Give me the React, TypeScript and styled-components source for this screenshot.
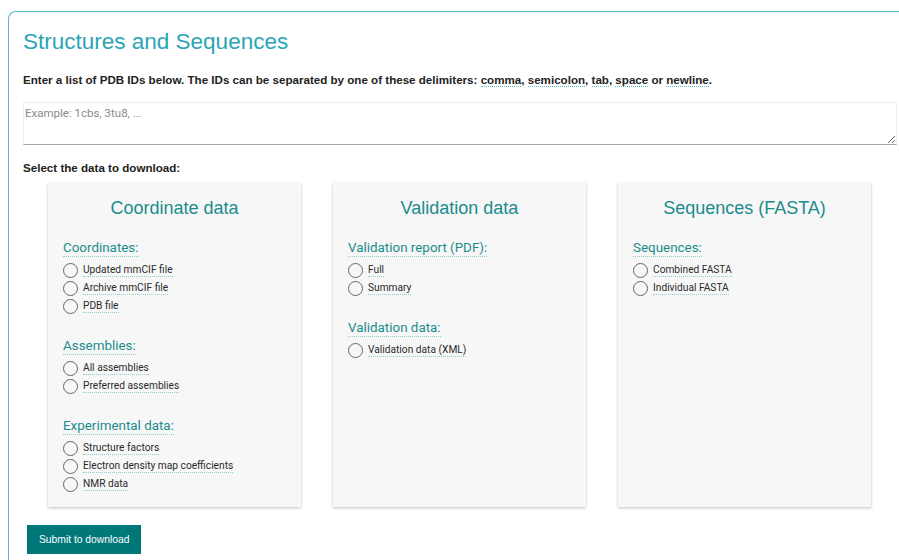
import React from "react";
import styled, { createGlobalStyle } from "styled-components";

const GlobalStyle = createGlobalStyle`
  html, body {
    margin: 0;
    padding: 0;
    background: #ffffff;
    overflow: hidden;
  }
  body {
    padding: 11px 0 0 8px;
    font-family: "Liberation Sans", Arial, sans-serif;
    color: #222;
  }
`;

const Panel = styled.section`
  width: 874px;
  padding: 16px 14px 6px 14px;
  border-top: 1px solid #5ab9c2;
  border-left: 1px solid #5ab9c2;
  border-top-left-radius: 8px;
  background: #fff;
`;

const Title = styled.h2`
  margin: 0;
  font-family: "Liberation Sans", Arial, sans-serif;
  font-weight: 400;
  font-size: 22.5px;
  line-height: 28px;
  color: #2ba5b6;
`;

const Intro = styled.p`
  margin: 15px 0 0;
  font-size: 11.6px;
  line-height: 18px;
  font-weight: 700;
  color: #222;
`;

const Term = styled.span`
  border-bottom: 1px dotted #5ab9c2;
`;

const IdInput = styled.textarea`
  display: block;
  box-sizing: border-box;
  width: 874px;
  height: 43px;
  margin-top: 13px;
  padding: 3px 0 0 1px;
  border: 1px solid #eeeeee;
  border-bottom: 1px solid #a8a8a8;
  font-family: Roboto, "Liberation Sans", sans-serif;
  font-size: 11.5px;
  color: #333;
  outline: none;
  &::placeholder {
    color: #8a8a8a;
  }
`;

const SectionLabel = styled.div`
  margin-top: 16px;
  font-size: 11.6px;
  line-height: 14px;
  font-weight: 700;
  color: #222;
`;

const Cards = styled.div`
  display: flex;
  gap: 32px;
  padding-left: 25px;
  margin-top: 8px;
`;

const Card = styled.div`
  box-sizing: border-box;
  width: 253px;
  height: 324px;
  padding: 14px 15px 0;
  background: #f7f7f7;
  box-shadow: 0 1px 3px rgba(0, 0, 0, 0.18), 0 1px 2px rgba(0, 0, 0, 0.08);
`;

const CardTitle = styled.h3`
  margin: 0 0 19px;
  text-align: center;
  font-family: "Liberation Sans", Arial, sans-serif;
  font-weight: 400;
  font-size: 18px;
  line-height: 22px;
  color: #1b8c8c;
`;

const Group = styled.div`
  margin-bottom: 21px;
`;

const GroupTitle = styled.div`
  display: inline-block;
  font-family: Roboto, "Liberation Sans", sans-serif;
  font-size: 13.4px;
  line-height: 16px;
  color: #1b8c8c;
  border-bottom: 1px dotted #8fcfd4;
  margin-bottom: 4px;
`;

const Option = styled.label`
  display: flex;
  align-items: center;
  height: 18px;
  gap: 5px;
  cursor: pointer;
`;

const Circle = styled.span`
  box-sizing: border-box;
  width: 15px;
  height: 15px;
  border: 1.5px solid #666;
  border-radius: 50%;
  flex: none;
`;

const OptionText = styled.span`
  font-family: Roboto, "Liberation Sans", sans-serif;
  font-size: 10.2px;
  line-height: 13px;
  color: #2a2a2a;
  border-bottom: 1px dotted #8fcfd4;
`;

const SubmitButton = styled.button`
  margin: 18px 0 0 4px;
  height: 29px;
  padding: 0 12px;
  border: none;
  background: #00787a;
  color: #fff;
  font-family: "Liberation Sans", Arial, sans-serif;
  font-size: 10.3px;
  cursor: pointer;
`;

type OptionGroup = { title: string; options: string[] };
type CardData = { title: string; groups: OptionGroup[] };

const cards: CardData[] = [
  {
    title: "Coordinate data",
    groups: [
      {
        title: "Coordinates:",
        options: ["Updated mmCIF file", "Archive mmCIF file", "PDB file"],
      },
      {
        title: "Assemblies:",
        options: ["All assemblies", "Preferred assemblies"],
      },
      {
        title: "Experimental data:",
        options: [
          "Structure factors",
          "Electron density map coefficients",
          "NMR data",
        ],
      },
    ],
  },
  {
    title: "Validation data",
    groups: [
      { title: "Validation report (PDF):", options: ["Full", "Summary"] },
      { title: "Validation data:", options: ["Validation data (XML)"] },
    ],
  },
  {
    title: "Sequences (FASTA)",
    groups: [
      {
        title: "Sequences:",
        options: ["Combined FASTA", "Individual FASTA"],
      },
    ],
  },
];

export default function App() {
  return (
    <>
      <GlobalStyle />
      <Panel>
        <Title>Structures and Sequences</Title>
        <Intro>
          Enter a list of PDB IDs below. The IDs can be separated by one of
          these delimiters: <Term>comma</Term>, <Term>semicolon</Term>,{" "}
          <Term>tab</Term>, <Term>space</Term> or <Term>newline</Term>.
        </Intro>
        <IdInput placeholder="Example: 1cbs, 3tu8, ..." />
        <SectionLabel>Select the data to download:</SectionLabel>
        <Cards>
          {cards.map((card) => (
            <Card key={card.title}>
              <CardTitle>{card.title}</CardTitle>
              {card.groups.map((g) => (
                <Group key={g.title}>
                  <GroupTitle>{g.title}</GroupTitle>
                  {g.options.map((o) => (
                    <Option key={o}>
                      <Circle />
                      <OptionText>{o}</OptionText>
                    </Option>
                  ))}
                </Group>
              ))}
            </Card>
          ))}
        </Cards>
        <SubmitButton>Submit to download</SubmitButton>
      </Panel>
    </>
  );
}
